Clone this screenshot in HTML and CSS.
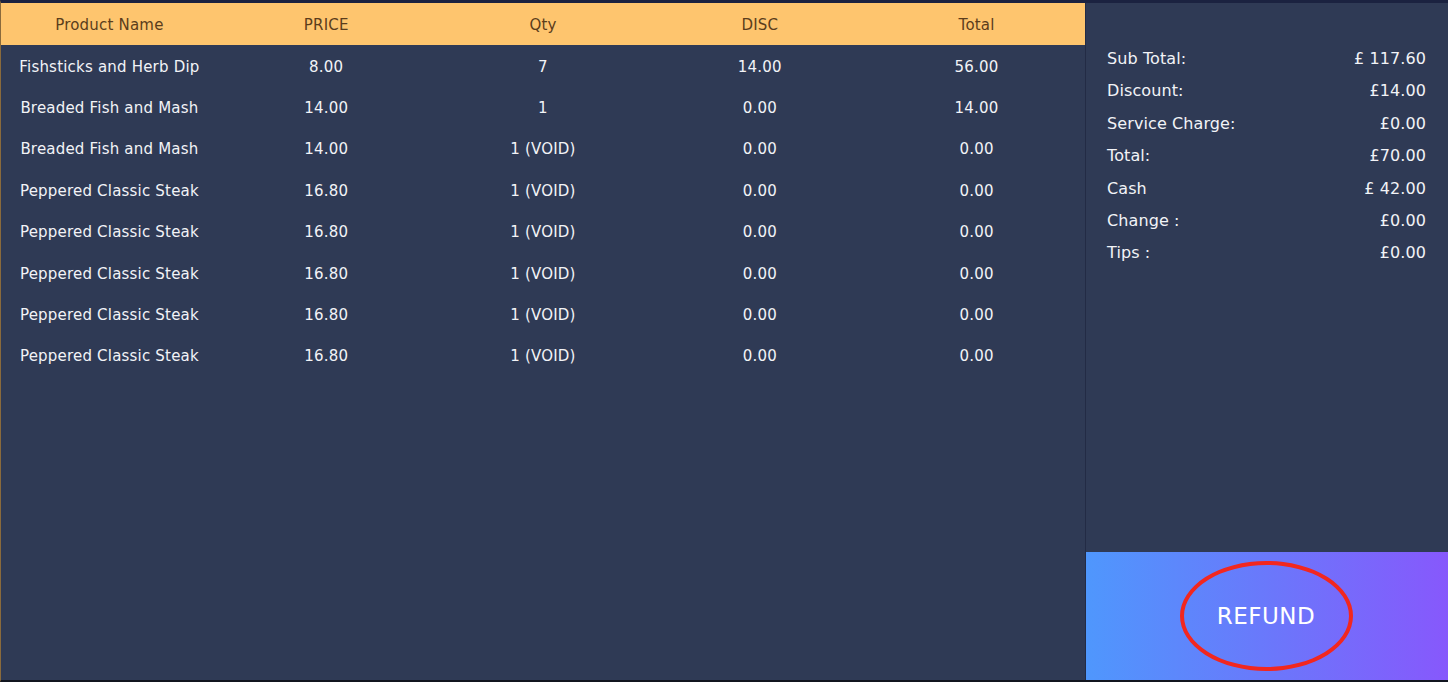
FILE: index.html
```html
<!DOCTYPE html>
<html lang="en">
<head>
    <meta charset="UTF-8">
    <title>Refund</title>
    <link rel="stylesheet" href="styles.css">
</head>
<body>
<div class="screen">
    <div class="orders">
        <div class="row head">
            <div>Product Name</div>
            <div>PRICE</div>
            <div>Qty</div>
            <div>DISC</div>
            <div>Total</div>
        </div>
        <div class="row">
            <div>Fishsticks and Herb Dip</div><div>8.00</div><div>7</div><div>14.00</div><div>56.00</div>
        </div>
        <div class="row">
            <div>Breaded Fish and Mash</div><div>14.00</div><div>1</div><div>0.00</div><div>14.00</div>
        </div>
        <div class="row">
            <div>Breaded Fish and Mash</div><div>14.00</div><div>1 (VOID)</div><div>0.00</div><div>0.00</div>
        </div>
        <div class="row">
            <div>Peppered Classic Steak</div><div>16.80</div><div>1 (VOID)</div><div>0.00</div><div>0.00</div>
        </div>
        <div class="row">
            <div>Peppered Classic Steak</div><div>16.80</div><div>1 (VOID)</div><div>0.00</div><div>0.00</div>
        </div>
        <div class="row">
            <div>Peppered Classic Steak</div><div>16.80</div><div>1 (VOID)</div><div>0.00</div><div>0.00</div>
        </div>
        <div class="row">
            <div>Peppered Classic Steak</div><div>16.80</div><div>1 (VOID)</div><div>0.00</div><div>0.00</div>
        </div>
        <div class="row">
            <div>Peppered Classic Steak</div><div>16.80</div><div>1 (VOID)</div><div>0.00</div><div>0.00</div>
        </div>
    </div>

    <div class="summary">
        <div class="totals">
            <div class="line"><span>Sub Total:</span><span>£ 117.60</span></div>
            <div class="line"><span>Discount:</span><span>£14.00</span></div>
            <div class="line"><span>Service Charge:</span><span>£0.00</span></div>
            <div class="line"><span>Total:</span><span>£70.00</span></div>
            <div class="line"><span>Cash</span><span>£ 42.00</span></div>
            <div class="line"><span>Change :</span><span>£0.00</span></div>
            <div class="line"><span>Tips :</span><span>£0.00</span></div>
        </div>
        <button class="refund">
            <span class="mark">REFUND</span>
        </button>
    </div>
</div>
</body>
</html>
```

FILE: styles.css
```css
body {
    margin: 0;
    background: #2f3a55;
    font-family: "DejaVu Sans", sans-serif;
    color: #f2f3f7;
}
.screen {
    display: flex;
    height: 682px;
    box-sizing: border-box;
    border-top: 3px solid #1b2240;
    border-bottom: 2px solid #11151f;
    border-left: 1px solid #8a6a3c;
}
.orders {
    width: 1084px;
    background: #2f3a55;
}
.row {
    display: grid;
    grid-template-columns: repeat(5, 1fr);
    height: 41.4px;
    padding-top: 2px;
    box-sizing: border-box;
    align-items: center;
    text-align: center;
    font-size: 15px;
    letter-spacing: 0.2px;
}
.row.head {
    height: 42px;
    background: #fec56e;
    color: #5b3d1c;
}
.summary {
    flex: 1;
    display: flex;
    flex-direction: column;
    border-left: 1px solid #232b45;
    background: #2f3a55;
}
.totals {
    flex: 1;
    padding: 46px 22px 0 21px;
}
.line {
    display: flex;
    justify-content: space-between;
    height: 32.4px;
    font-size: 16px;
    letter-spacing: 0.1px;
}
.refund {
    height: 128px;
    flex: none;
    border: none;
    margin: 0;
    padding: 0;
    background: linear-gradient(90deg, #4f97fd 0%, #6a78fb 50%, #8758fc 100%);
    display: flex;
    align-items: center;
    justify-content: center;
    font-family: inherit;
    cursor: pointer;
}
.mark {
    width: 173px;
    height: 110px;
    border: 4px solid #f2271f;
    border-radius: 50%;
    box-sizing: border-box;
    display: flex;
    align-items: center;
    justify-content: center;
    color: #ffffff;
    font-size: 23px;
    letter-spacing: 0.5px;
    margin-left: -2px;
}
```
